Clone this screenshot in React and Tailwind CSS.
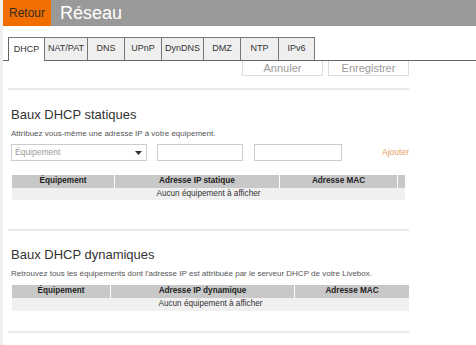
import React from 'react';

const tabs = ['DHCP', 'NAT/PAT', 'DNS', 'UPnP', 'DynDNS', 'DMZ', 'NTP', 'IPv6'];
const tabWidths = ['w-[37px]', 'w-[43px]', 'w-[37px]', 'w-[37px]', 'w-[42px]', 'w-[37px]', 'w-[38px]', 'w-[36px]'];

const Separator = ({ className }) => <div className={`h-[2px] bg-[#e9e9e9] ${className}`} />;

const App = () => {
    return (
        <div className="w-[476px] h-[345px] overflow-hidden bg-[#efefef] font-['Liberation_Sans',Arial,sans-serif]">
            <div className="ml-[3px] h-full bg-white">
                {/* header */}
                <div className="flex h-[26px]">
                    <div className="w-[48px] bg-[#f16e00] flex items-center justify-center text-[12px] text-[#3a2a20]">Retour</div>
                    <div className="flex-1 bg-[#999999] flex items-center pl-[9px] text-[18px] text-white">Réseau</div>
                </div>

                {/* tabs */}
                <div className="flex items-end h-[24px] mt-[11px]">
                    <div className="w-[5px] border-b border-[#666]" />
                    {tabs.map((t, i) => (
                        <div
                            key={t}
                            className={`${tabWidths[i]} h-[24px] flex items-center justify-center text-[9px] text-[#333] border-t border-r border-[#777] ${
                                i === 0 ? 'bg-white border-l border-l-[#666]' : 'bg-[#efefef] border-b border-b-[#666]'
                            }`}
                        >
                            {t}
                        </div>
                    ))}
                    <div className="flex-1 border-b border-[#666]" />
                </div>

                <div className="ml-[5px] w-[401px]">
                    {/* buttons */}
                    <div className="flex justify-end gap-[5px]">
                        <button className="w-[81px] h-[15px] border border-t-0 border-[#dddddd] bg-white text-[11px] leading-none text-[#9a9a9a]">Annuler</button>
                        <button className="w-[81px] h-[15px] border border-t-0 border-[#dddddd] bg-white text-[11px] leading-none text-[#9a9a9a]">Enregistrer</button>
                    </div>

                    <Separator className="mt-[12px]" />

                    {/* static leases */}
                    <h2 className="mt-[17px] ml-[3px] text-[13px] leading-[15px] text-[#333]">Baux DHCP statiques</h2>
                    <p className="mt-[6px] ml-[3px] text-[8px] leading-[11px] text-[#555]">Attribuez vous-même une adresse IP à votre équipement.</p>

                    <div className="flex items-center mt-[5px] ml-[3px] h-[17px]">
                        <div className="w-[136px] h-[17px] border border-[#cccccc] flex items-center justify-between pl-[3px] pr-[4px]">
                            <span className="text-[8.5px] text-[#9a9a9a]">Équipement</span>
                            <svg width="7" height="4" viewBox="0 0 7 4"><path d="M0 0h7L3.5 4z" fill="#333" /></svg>
                        </div>
                        <div className="ml-[10px] w-[87px] h-[17px] border border-[#cccccc]" />
                        <div className="ml-[11px] w-[88px] h-[17px] border border-[#cccccc]" />
                        <span className="ml-[40px] text-[8.5px] text-[#e99a5c]">Ajouter</span>
                    </div>

                    <div className="mt-[14px] ml-[4px] w-[393px] text-[8.2px]">
                        <div className="flex gap-[1px] h-[13px] font-bold text-[#222]">
                            <div className="w-[102px] bg-[#c8c8c8] flex items-center justify-center">Équipement</div>
                            <div className="w-[164px] bg-[#c8c8c8] flex items-center justify-center">Adresse IP statique</div>
                            <div className="w-[117px] bg-[#c8c8c8] flex items-center justify-center">Adresse MAC</div>
                            <div className="flex-1 bg-[#c8c8c8]" />
                        </div>
                        <div className="h-[12px] bg-[#f0f0f0] flex items-center justify-center text-[#333]">Aucun équipement à afficher</div>
                    </div>

                    <Separator className="mt-[29px]" />

                    {/* dynamic leases */}
                    <h2 className="mt-[16px] ml-[3px] text-[13px] leading-[15px] text-[#333]">Baux DHCP dynamiques</h2>
                    <p className="mt-[6px] ml-[3px] text-[8px] leading-[11px] text-[#555]">Retrouvez tous les équipements dont l'adresse IP est attribuée par le serveur DHCP de votre Livebox.</p>

                    <div className="mt-[6px] ml-[4px] w-[397px] text-[8.2px]">
                        <div className="flex gap-[1px] h-[13px] font-bold text-[#222]">
                            <div className="w-[98px] bg-[#c8c8c8] flex items-center justify-center">Équipement</div>
                            <div className="w-[183px] bg-[#c8c8c8] flex items-center justify-center">Adresse IP dynamique</div>
                            <div className="flex-1 bg-[#c8c8c8] flex items-center justify-center">Adresse MAC</div>
                        </div>
                        <div className="h-[13px] bg-[#f0f0f0] flex items-center justify-center text-[#333]">Aucun équipement à afficher</div>
                    </div>

                    <Separator className="mt-[20px]" />
                </div>
            </div>
        </div>
    );
};

export default App;
